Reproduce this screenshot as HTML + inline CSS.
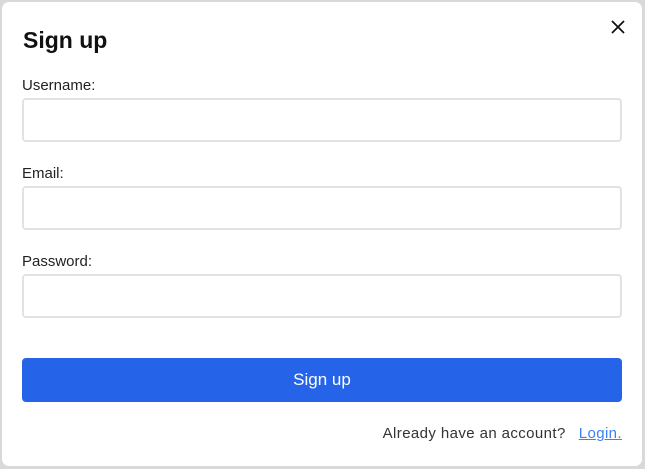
<!DOCTYPE html>
<html><head><style>
body{margin:0;width:645px;height:469px;background:#d9d9d9;position:relative;overflow:hidden;font-family:"Liberation Sans",sans-serif;}
.m{position:absolute;left:2px;top:2px;width:640px;height:464px;background:#fff;border-radius:7px;}
h1{position:absolute;left:21px;top:25px;margin:0;font-size:23px;font-weight:bold;color:#111;}
.x{position:absolute;left:608px;top:17px;}
label{position:absolute;left:20px;font-size:15px;color:#222;}
.in{position:absolute;left:20px;width:596px;height:40px;border:2px solid #e2e2e2;border-radius:4px;}
.btn{position:absolute;left:20px;top:356px;width:600px;height:44px;background:#2563e8;border-radius:4px;color:#fff;font-size:17px;text-align:center;line-height:44px;}
.f{position:absolute;right:20px;top:423px;font-size:15px;color:#333;letter-spacing:0.4px;}
.f a{color:#3b82f6;text-decoration:underline;margin-left:13px;}
</style></head><body>
<div class="m">
<h1>Sign up</h1>
<svg class="x" width="16" height="16" viewBox="0 0 16 16"><path d="M2 2L14 14M14 2L2 14" stroke="#111" stroke-width="1.8"/></svg>
<label style="top:75px">Username:</label><div class="in" style="top:96px"></div>
<label style="top:163px">Email:</label><div class="in" style="top:184px"></div>
<label style="top:251px">Password:</label><div class="in" style="top:272px"></div>
<div class="btn">Sign up</div>
<div class="f">Already have an account?<a>Login.</a></div>
</div>
</body></html>
